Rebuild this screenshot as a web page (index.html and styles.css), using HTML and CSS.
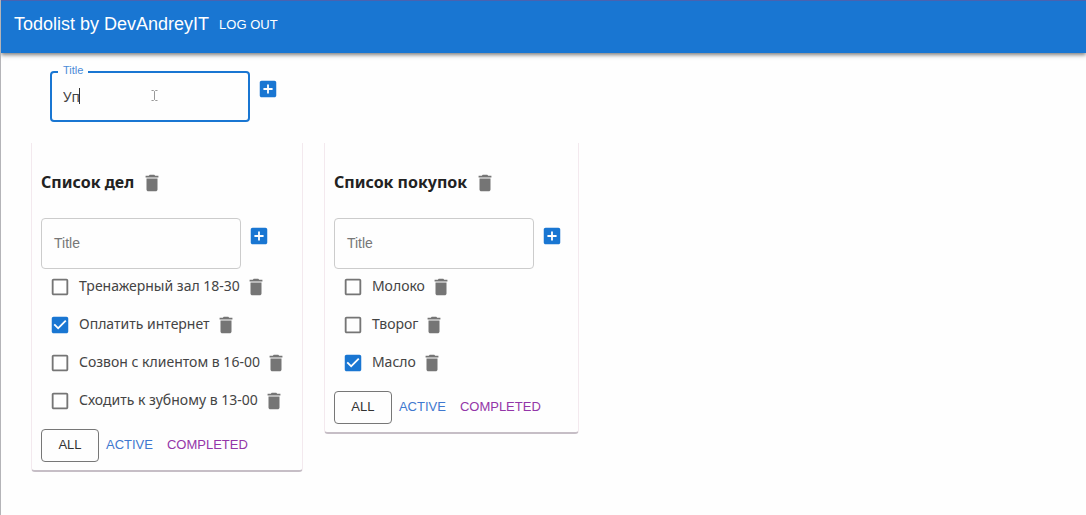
FILE: index.html
```html
<!DOCTYPE html>
<html lang="ru">
<head>
<meta charset="utf-8">
<title>Todolist</title>
<link rel="stylesheet" href="styles.css">
</head>
<body>
<svg class="sprite" aria-hidden="true">
  <symbol id="trash" viewBox="0 0 24 24"><path d="M6 19c0 1.100.9 2 2 2h8c1.100 0 2-.9 2-2V7H6v12zM19 4h-3.500l-1-1h-5l-1 1H5v2h14V4z"/></symbol>
  <symbol id="add" viewBox="0 0 24 24"><path d="M19 3H5c-1.110 0-2 .9-2 2v14c0 1.100.89 2 2 2h14c1.100 0 2-.9 2-2V5c0-1.100-.9-2-2-2zm-2 10h-4v4h-2v-4H7v-2h4V7h2v4h4v2z"/></symbol>
</svg>
<header class="app-bar">
  <h1 class="app-title">Todolist by DevAndreyIT</h1>
  <button class="logout" type="button">LOG OUT</button>
</header>
<main class="page">
  <form class="add-form add-form-main">
    <div class="field field-active">
      <label class="field-label" for="new-list">Title</label>
      <input class="field-input" id="new-list" type="text" value="Уп" autocomplete="off">
      <span class="caret"></span>
      <svg class="pointer" viewBox="0 0 7 11" aria-hidden="true"><path d="M.5.500h2l1 1 1-1h2M3.500 1.500v8M.5 10.500h2l1-1 1 1h2"/></svg>
    </div>
    <button class="icon-button add" type="button" aria-label="Add list"><svg class="icon"><use href="#add"/></svg></button>
  </form>
  <div class="lists">
    <section class="card">
      <div class="card-head">
        <h2 class="card-title">Список дел</h2>
        <button class="icon-button" type="button" aria-label="Delete list"><svg class="icon"><use href="#trash"/></svg></button>
      </div>
      <form class="add-form">
        <div class="field">
          <label class="field-label" for="task-a">Title</label>
          <input class="field-input" id="task-a" type="text">
        </div>
        <button class="icon-button add" type="button" aria-label="Add task"><svg class="icon"><use href="#add"/></svg></button>
      </form>
      <ul class="tasks">
        <li class="task"><input class="check" type="checkbox" id="a1"><label class="task-name" for="a1">Тренажерный зал 18-30</label><button class="icon-button task-delete" type="button" aria-label="Delete task"><svg class="icon"><use href="#trash"/></svg></button></li>
        <li class="task"><input class="check" type="checkbox" id="a2" checked><label class="task-name" for="a2">Оплатить интернет</label><button class="icon-button task-delete" type="button" aria-label="Delete task"><svg class="icon"><use href="#trash"/></svg></button></li>
        <li class="task"><input class="check" type="checkbox" id="a3"><label class="task-name" for="a3">Созвон с клиентом в 16-00</label><button class="icon-button task-delete" type="button" aria-label="Delete task"><svg class="icon"><use href="#trash"/></svg></button></li>
        <li class="task"><input class="check" type="checkbox" id="a4"><label class="task-name" for="a4">Сходить к зубному в 13-00</label><button class="icon-button task-delete" type="button" aria-label="Delete task"><svg class="icon"><use href="#trash"/></svg></button></li>
      </ul>
      <div class="filters">
        <button class="filter filter-all" type="button">ALL</button>
        <button class="filter filter-active" type="button">ACTIVE</button>
        <button class="filter filter-completed" type="button">COMPLETED</button>
      </div>
    </section>
    <section class="card">
      <div class="card-head">
        <h2 class="card-title">Список покупок</h2>
        <button class="icon-button" type="button" aria-label="Delete list"><svg class="icon"><use href="#trash"/></svg></button>
      </div>
      <form class="add-form">
        <div class="field">
          <label class="field-label" for="task-b">Title</label>
          <input class="field-input" id="task-b" type="text">
        </div>
        <button class="icon-button add" type="button" aria-label="Add task"><svg class="icon"><use href="#add"/></svg></button>
      </form>
      <ul class="tasks">
        <li class="task"><input class="check" type="checkbox" id="b1"><label class="task-name" for="b1">Молоко</label><button class="icon-button task-delete" type="button" aria-label="Delete task"><svg class="icon"><use href="#trash"/></svg></button></li>
        <li class="task"><input class="check" type="checkbox" id="b2"><label class="task-name" for="b2">Творог</label><button class="icon-button task-delete" type="button" aria-label="Delete task"><svg class="icon"><use href="#trash"/></svg></button></li>
        <li class="task"><input class="check" type="checkbox" id="b3" checked><label class="task-name" for="b3">Масло</label><button class="icon-button task-delete" type="button" aria-label="Delete task"><svg class="icon"><use href="#trash"/></svg></button></li>
      </ul>
      <div class="filters">
        <button class="filter filter-all" type="button">ALL</button>
        <button class="filter filter-active" type="button">ACTIVE</button>
        <button class="filter filter-completed" type="button">COMPLETED</button>
      </div>
    </section>
  </div>
</main>
</body>
</html>
```
FILE: styles.css
```css
* { box-sizing: border-box; }
html { background: #fefefe; }
body {
  margin: 0;
  min-height: 100vh;
  border-left: 1px solid #b4b4b8;
  font-family: "Noto Sans", "Open Sans", sans-serif;
  font-size: 14px;
  color: #444;
}
button { border: 0; background: none; margin: 0; cursor: pointer; }
.sprite { display: none; }

.app-bar {
  display: flex;
  align-items: center;
  gap: 3px;
  min-height: 53px;
  padding: 0 13px 5px;
  border-top: 1px solid #4a62b0;
  background: #1976d2;
  box-shadow: 0 2px 4px rgba(0, 0, 0, .5);
  color: #fff;
  font-family: "Liberation Sans", Arial, sans-serif;
}
.app-title { margin: 0; font-size: 18px; font-weight: 400; }
.logout { padding: 7px; color: #fff; font: 13px "Liberation Sans", Arial, sans-serif; }

.page { padding: 18px 30px; }
.add-form { display: flex; align-items: flex-start; }
.add-form-main { margin: 0 0 21px 19px; }
.field { position: relative; width: 200px; }
.field-input {
  display: block;
  width: 100%;
  height: 51px;
  padding: 0 11px;
  border: 1px solid #ccc;
  border-radius: 4px;
  outline: 0;
  background: transparent;
  color: #444;
  font: 14px "Noto Sans", "Open Sans", sans-serif;
}
.field-label {
  position: absolute;
  top: 17px;
  left: 13px;
  color: #777;
  font: 14px/16px "Liberation Sans", Arial, sans-serif;
}
.field-active .field-input { border: 2px solid #1976d2; }
.field-active .field-label {
  top: -8px;
  left: 8px;
  padding: 0 5px;
  background: #fefefe;
  color: #4a8bd8;
  font-size: 11px;
  line-height: 14px;
}
.caret { position: absolute; left: 29px; top: 17px; width: 1px; height: 16px; background: #333; }
.pointer { position: absolute; left: 101px; top: 19px; width: 7px; height: 11px; fill: none; stroke: #999; }

.icon-button { display: flex; flex: none; padding: 7px; color: #757575; }
.icon { width: 22px; height: 22px; fill: currentColor; }
.add { color: #1976d2; }

.lists { display: flex; align-items: flex-start; gap: 21px; }
.card {
  padding: 22px 8px 8px;
  padding-left: 9px;
  border: 1px solid #f3e9ee;
  border-top: 0;
  border-bottom: 2px solid #c6bec6;
  border-radius: 0 0 4px 4px;
}
.card-head { display: flex; align-items: center; margin-bottom: 17px; }
.card-title { margin: 0; padding-bottom: 2px; color: #222; font-size: 16px; font-weight: 700; line-height: 22px; }
.tasks { margin: -1px 0 9px; padding: 0; list-style: none; }
.task { display: flex; align-items: center; height: 38px; white-space: nowrap; }
.task-name { padding-bottom: 3px; }
.task-delete { padding-left: 5px; }
.check {
  appearance: none;
  flex: none;
  width: 22px;
  height: 22px;
  margin: 0 8px;
  background: center / 22px url("data:image/svg+xml,%3Csvg xmlns='http://www.w3.org/2000/svg' viewBox='0 0 24 24'%3E%3Cpath fill='%23757575' d='M19 5v14H5V5h14m0-2H5c-1.100 0-2 .9-2 2v14c0 1.100.9 2 2 2h14c1.100 0 2-.9 2-2V5c0-1.100-.9-2-2-2z'/%3E%3C/svg%3E");
}
.check:checked {
  background-image: url("data:image/svg+xml,%3Csvg xmlns='http://www.w3.org/2000/svg' viewBox='0 0 24 24'%3E%3Cpath fill='%231976d2' d='M19 3H5c-1.110 0-2 .9-2 2v14c0 1.100.89 2 2 2h14c1.110 0 2-.9 2-2V5c0-1.100-.89-2-2-2zm-9 14l-5-5 1.410-1.410L10 14.170l7.590-7.590L19 8l-9 9z'/%3E%3C/svg%3E");
}
.filters { display: flex; }
.filter {
  min-width: 58px;
  height: 33px;
  padding: 0 7px 2px;
  border-radius: 4px;
  font: 13px "Liberation Sans", Arial, sans-serif;
}
.filter-all { border: 1px solid #777; color: #333; }
.filter-active { color: #3f78cf; }
.filter-completed { color: #9436a8; }
```
